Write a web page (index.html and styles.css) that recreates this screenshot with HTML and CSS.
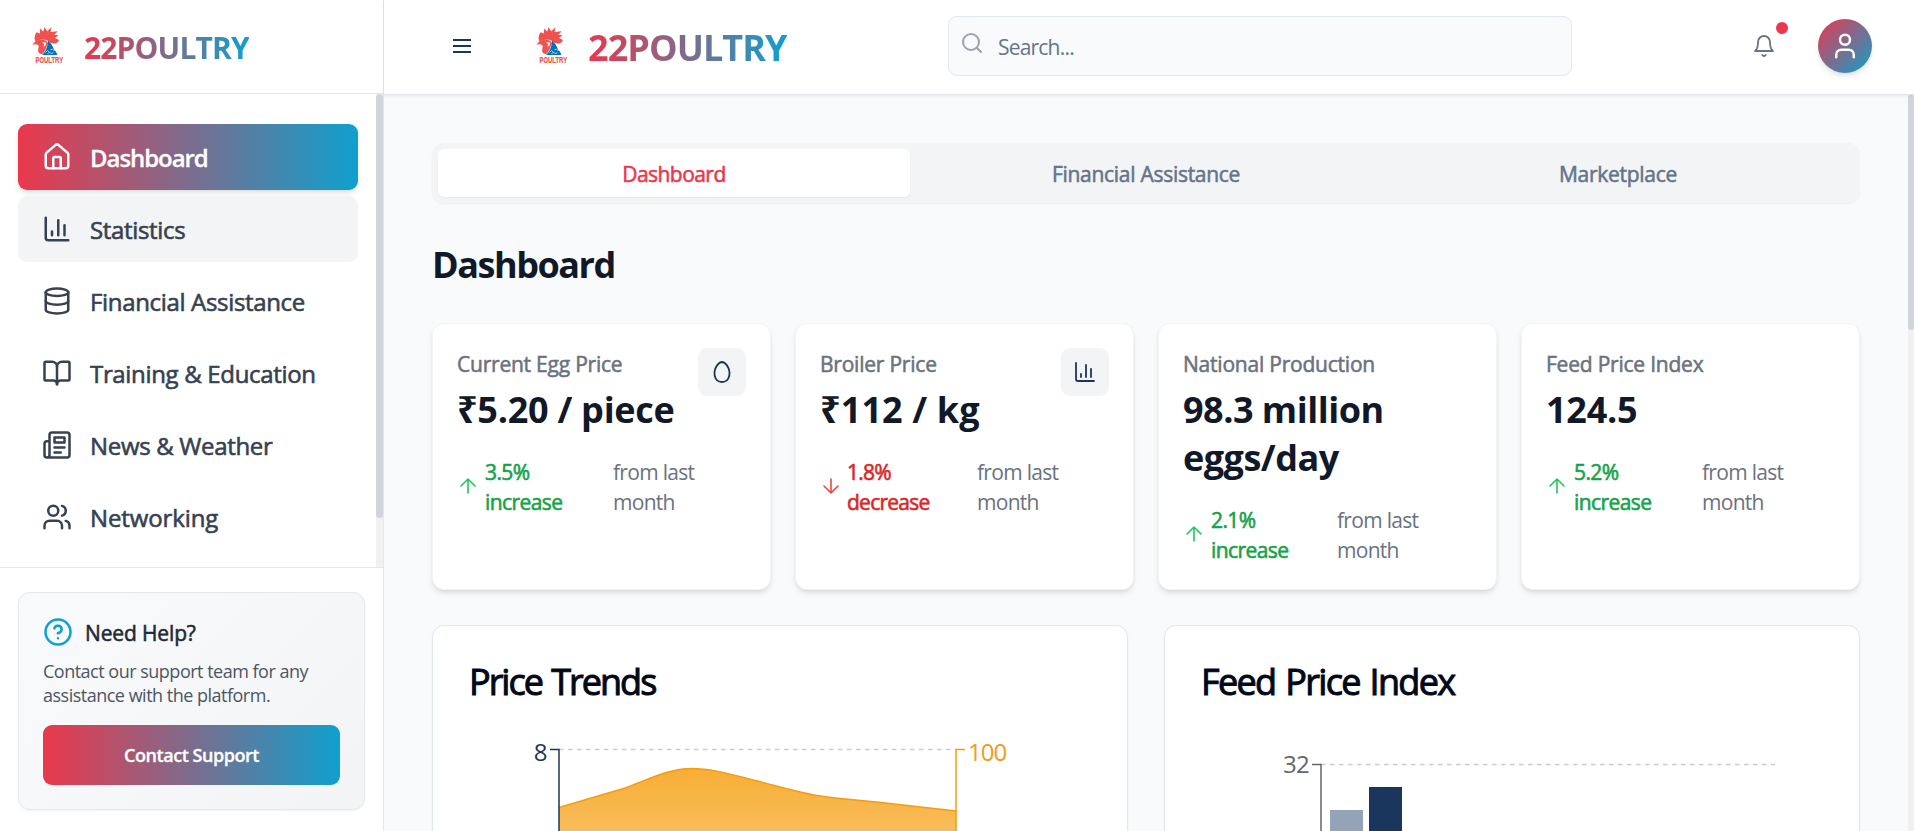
FILE: index.html
```html
<!DOCTYPE html>
<html lang="en">
<head>
<meta charset="utf-8">
<title>22POULTRY</title>
<link rel="stylesheet" href="styles.css">
</head>
<body>
<svg class="defs" width="0" height="0" aria-hidden="true">
  <defs>
    <linearGradient id="area" x1="0" y1="0" x2="0" y2="1">
      <stop offset="0" stop-color="#f7ae35"/><stop offset="1" stop-color="#fdebd0"/>
    </linearGradient>
    <symbol id="rooster" viewBox="0 0 32 38">
      <path fill="#f0524f" d="M3.500 14.500C1.800 11.500 2.800 7.500 4.600 5.200L7.800 6.500L8 1.500L11.200 4.500L12.600 .2L15.200 4.200L19.500 .3L18.500 5L25.700 4.200L22.300 7.700L26.500 8.300L23 11L27 13C26 16.500 21.500 17.500 18.500 15.800C15.500 12.500 10 11 3.500 14.500Z"/>
      <path fill="#f0524f" d="M.3 17.800L3.300 14.500C8.500 10.800 14 12.600 16 16C14.500 19 14 23.500 10.500 26.700C7.500 27.800 5.400 25 6.300 21.500C6.600 20 7 19 6.200 18C4.500 16.800 2.300 17 .3 17.800Z"/>
      <path fill="#fff" d="M9.500 15C12 15.500 12.500 18 11.500 20C13.500 19 14.200 17.500 14 15.500Z"/>
      <path fill="#0870b8" d="M16 13.500C19 16 21 19.500 22 22.500C23.500 24 25 26 25.300 28H10C13 25.500 15.500 21 16 13.500Z"/>
      <path fill="none" stroke="#cfe6f5" stroke-width=".8" d="M13.500 25.500l2-2 2 2m1-2.500l2-1 2 2m-7 3l2-2 2 2 2-2"/>
      <text class="mark-text" x="3.600" y="36.200" textLength="27.500" lengthAdjust="spacingAndGlyphs">POULTRY</text>
    </symbol>
    <symbol id="chart" viewBox="0 0 24 24"><path d="M3 3v16a2 2 0 0 0 2 2h16M18 17V9M13 17V5M8 17v-3"/></symbol>
    <symbol id="up" viewBox="0 0 24 24"><path d="m5 12 7-7 7 7M12 19V5"/></symbol>
    <symbol id="down" viewBox="0 0 24 24"><path d="M12 5v14M19 12l-7 7-7-7"/></symbol>
  </defs>
</svg>
<div class="app">
  <aside class="sidebar">
    <div class="brand">
      <svg class="brand-mark"><use href="#rooster"/></svg>
      <span class="brand-name">22POULTRY</span>
    </div>
    <div class="nav-area">
      <nav class="nav">
        <a class="nav-item active"><svg class="icon icon-30" viewBox="0 0 24 24"><path d="M15 21v-8a1 1 0 0 0-1-1h-4a1 1 0 0 0-1 1v8"/><path d="M3 10a2 2 0 0 1 .709-1.528l7-5.999a2 2 0 0 1 2.582 0l7 5.999A2 2 0 0 1 21 10v9a2 2 0 0 1-2 2H5a2 2 0 0 1-2-2z"/></svg><span>Dashboard</span></a>
        <a class="nav-item hover"><svg class="icon icon-30"><use href="#chart"/></svg><span>Statistics</span></a>
        <a class="nav-item"><svg class="icon icon-30" viewBox="0 0 24 24"><ellipse cx="12" cy="5" rx="9" ry="3"/><path d="M3 5v14a9 3 0 0 0 18 0V5"/><path d="M3 12a9 3 0 0 0 18 0"/></svg><span>Financial Assistance</span></a>
        <a class="nav-item"><svg class="icon icon-30" viewBox="0 0 24 24"><path d="M12 7v14"/><path d="M3 18a1 1 0 0 1-1-1V4a1 1 0 0 1 1-1h5a4 4 0 0 1 4 4 4 4 0 0 1 4-4h5a1 1 0 0 1 1 1v13a1 1 0 0 1-1 1h-6a3 3 0 0 0-3 3 3 3 0 0 0-3-3z"/></svg><span>Training &amp; Education</span></a>
        <a class="nav-item"><svg class="icon icon-30" viewBox="0 0 24 24"><path d="M4 22h16a2 2 0 0 0 2-2V4a2 2 0 0 0-2-2H8a2 2 0 0 0-2 2v16a2 2 0 0 1-2 2Zm0 0a2 2 0 0 1-2-2v-9c0-1.100.9-2 2-2h2M18 14h-8M15 18h-5M10 6h8v4h-8V6Z"/></svg><span>News &amp; Weather</span></a>
        <a class="nav-item wide"><svg class="icon icon-30" viewBox="0 0 24 24"><path d="M16 21v-2a4 4 0 0 0-4-4H6a4 4 0 0 0-4 4v2"/><circle cx="9" cy="7" r="4"/><path d="M22 21v-2a4 4 0 0 0-3-3.870M16 3.130a4 4 0 0 1 0 7.750"/></svg><span>Networking</span></a>
      </nav>
      <div class="scrollbar nav-scroll"><div class="thumb"></div></div>
    </div>
    <div class="sidebar-foot">
      <div class="help">
        <div class="help-head"><svg class="icon icon-30" viewBox="0 0 24 24"><circle cx="12" cy="12" r="10"/><path d="M9.090 9a3 3 0 0 1 5.830 1c0 2-3 3-3 3M12 17h.01"/></svg><span>Need Help?</span></div>
        <p class="help-text">Contact our support team for any<br>assistance with the platform.</p>
        <button class="help-btn">Contact Support</button>
      </div>
    </div>
  </aside>

  <div class="page">
    <header class="topbar">
      <svg class="icon menu" viewBox="0 0 24 24"><path d="M4 6h16M4 12h16M4 18h16"/></svg>
      <div class="top-brand">
        <svg class="brand-mark"><use href="#rooster"/></svg>
        <span class="brand-name large">22POULTRY</span>
      </div>
      <div class="search">
        <svg class="icon icon-24" viewBox="0 0 24 24"><circle cx="11" cy="11" r="8"/><path d="m21 21-4.300-4.300"/></svg>
        <span>Search...</span>
      </div>
      <div class="top-actions">
        <div class="bell"><svg class="icon icon-24" viewBox="0 0 24 24"><path d="M6 8a6 6 0 0 1 12 0c0 7 3 9 3 9H3s3-2 3-9M10.300 21a1.940 1.940 0 0 0 3.400 0"/></svg><i class="dot"></i></div>
        <div class="avatar"><svg class="icon icon-30" viewBox="0 0 24 24"><path d="M19 21v-2a4 4 0 0 0-4-4H9a4 4 0 0 0-4 4v2"/><circle cx="12" cy="7" r="4"/></svg></div>
      </div>
    </header>

    <div class="body">
      <main class="main">
        <div class="tabs">
          <div class="tab selected">Dashboard</div>
          <div class="tab">Financial Assistance</div>
          <div class="tab">Marketplace</div>
        </div>
        <h1 class="title">Dashboard</h1>
        <section class="stats">
          <article class="stat">
            <div class="stat-top">
              <div><div class="stat-label">Current Egg Price</div><div class="stat-value">₹5.20 / piece</div></div>
              <div class="stat-icon"><svg class="icon icon-24" viewBox="0 0 24 24"><path d="M12 22c6.230-.05 7.870-5.570 7.500-10-.36-4.340-3.950-9.960-7.500-10-3.550.04-7.140 5.660-7.500 10-.37 4.430 1.270 9.950 7.500 10z"/></svg></div>
            </div>
            <div class="trend up"><svg class="icon icon-24"><use href="#up"/></svg><b>3.5% increase</b><span>from last month</span></div>
          </article>
          <article class="stat">
            <div class="stat-top">
              <div><div class="stat-label">Broiler Price</div><div class="stat-value loose">₹112 / kg</div></div>
              <div class="stat-icon"><svg class="icon icon-24"><use href="#chart"/></svg></div>
            </div>
            <div class="trend down"><svg class="icon icon-24"><use href="#down"/></svg><b>1.8% decrease</b><span>from last month</span></div>
          </article>
          <article class="stat">
            <div class="stat-top">
              <div><div class="stat-label">National Production</div><div class="stat-value tight">98.3 million<br>eggs/day</div></div>
            </div>
            <div class="trend up near"><svg class="icon icon-24"><use href="#up"/></svg><b>2.1% increase</b><span>from last month</span></div>
          </article>
          <article class="stat">
            <div class="stat-top">
              <div><div class="stat-label">Feed Price Index</div><div class="stat-value">124.5</div></div>
            </div>
            <div class="trend up"><svg class="icon icon-24"><use href="#up"/></svg><b>5.2% increase</b><span>from last month</span></div>
          </article>
        </section>
        <section class="charts">
          <article class="panel">
            <h2 class="panel-title trends">Price Trends</h2>
            <svg class="plot" viewBox="469 731 622 300" width="622" height="300">
              <path d="M559 749.500H956" stroke="#ccc" stroke-width="1.500" stroke-dasharray="4.500 4.500"/>
              <path d="M559 807.500C581 801 603 794.500 625.200 788C647 780 669 768.500 691.300 768.500C713 768.500 735 775.500 757.500 781C779 786.500 801 793.500 823.700 796.500C846 799.500 868 801 889.800 803.500C912 806 934 808.500 956 811V1031H559Z" fill="url(#area)"/>
              <path d="M559 807.500C581 801 603 794.500 625.200 788C647 780 669 768.500 691.300 768.500C713 768.500 735 775.500 757.500 781C779 786.500 801 793.500 823.700 796.500C846 799.500 868 801 889.800 803.500C912 806 934 808.500 956 811" fill="none" stroke="#f39c12" stroke-width="1.500"/>
              <path d="M550 749.500h9V1031" fill="none" stroke="#1a365d" stroke-width="1.500"/>
              <path d="M965 749.500h-9V1031" fill="none" stroke="#f39c12" stroke-width="1.500"/>
              <text x="547.500" y="761" text-anchor="end" fill="#1a365d">8</text>
              <text x="968" y="761" fill="#f39c12" letter-spacing="-1">100</text>
            </svg>
          </article>
          <article class="panel">
            <h2 class="panel-title index">Feed Price Index</h2>
            <svg class="plot" viewBox="1201 731 622 300" width="622" height="300">
              <path d="M1321 764.500H1775" stroke="#ccc" stroke-width="1.500" stroke-dasharray="4.500 4.500"/>
              <path d="M1312 764.500h9V1031" fill="none" stroke="#666" stroke-width="1.500"/>
              <path d="M1330 810h33v221h-33z" fill="#94a3b8"/>
              <path d="M1369 787h33v244h-33z" fill="#1a365d"/>
              <text x="1283" y="773" fill="#666" letter-spacing="-.8">32</text>
            </svg>
          </article>
        </section>
      </main>
      <div class="scrollbar page-scroll"><div class="thumb"></div></div>
    </div>
  </div>
</div>
</body>
</html>
```
FILE: styles.css
```css
* { box-sizing: border-box; margin: 0; }
html, body { height: 100%; overflow: hidden; }
body { font-family: "Open Sans", "Noto Sans", sans-serif; background: #f8fafc; color: #111827; }
.defs { position: absolute; }
.app { display: flex; height: 831px; }
.icon { fill: none; stroke: currentColor; stroke-width: 2; stroke-linecap: round; stroke-linejoin: round; flex: none; display: block; }
.icon-30 { width: 30px; height: 30px; stroke-width: 2; }
.icon-24 { width: 24px; height: 24px; stroke-width: 1.8; }

/* Sidebar */
.sidebar { width: 384px; flex: none; display: flex; flex-direction: column; background: #fff; border-right: 1px solid #e5e7eb; }
.brand { height: 94px; flex: none; display: flex; align-items: center; gap: 20px; padding: 0 0 2px 32px; border-bottom: 1px solid #e5e7eb; }
.brand-mark { width: 32px; height: 38px; flex: none; display: block; }
.mark-text { font: 700 8.5px "Liberation Sans", sans-serif; fill: #f0524f; stroke: #f0524f; stroke-width: .2px; }
.brand-name { font-size: 30px; line-height: 36px; font-weight: 700; letter-spacing: -.86px; padding-top: 4px; background: linear-gradient(90deg, #ea384c, #0fa0ce); -webkit-background-clip: text; background-clip: text; color: transparent; }
.brand-name.large { font-size: 36px; letter-spacing: -.95px; }
.nav-area { flex: 1; min-height: 0; display: flex; }
.nav { flex: 1; padding: 30px 18px 0; display: flex; flex-direction: column; gap: 6px; }
.nav-item { height: 66px; flex: none; display: flex; align-items: center; gap: 18px; padding-left: 24px; border-radius: 9px; font-size: 24px; line-height: 36px; letter-spacing: -.33px; color: #374151; -webkit-text-stroke: .6px; }
.nav-item span { padding-top: 2px; }
.nav-item.wide { letter-spacing: -.12px; }
.nav-item.active { color: #fff; letter-spacing: -1.06px; font-weight: 600; -webkit-text-stroke: .3px; background: linear-gradient(90deg, #ea384c, #0fa0ce); box-shadow: 0 4px 6px -1px rgba(0,0,0,.1), 0 2px 4px -2px rgba(0,0,0,.1); }
.nav-item.hover { background: #f3f4f6; }
.scrollbar { background: #f1f1f1; flex: none; }
.thumb { background: #d1d5db; border-radius: 5px; }
.nav-scroll { width: 7px; }
.nav-scroll .thumb { height: 424px; }
.sidebar-foot { height: 264px; flex: none; border-top: 1px solid #e5e7eb; padding: 24px 18px 21px; }
.help { height: 218px; border: 1px solid #e5e7eb; border-radius: 12px; padding: 24px; background: linear-gradient(135deg, #f9fafb, #f3f4f6); box-shadow: 0 1px 2px rgba(0,0,0,.05); }
.help-head { display: flex; align-items: center; gap: 12px; height: 30px; color: #1f2937; font-size: 21px; letter-spacing: -.14px; -webkit-text-stroke: .55px; }
.help-head span { padding-top: 2px; }
.help-head .icon { color: #0fa0ce; }
.help-text { margin-top: 12px; font-size: 18px; line-height: 24px; letter-spacing: -.5px; color: #4b5563; white-space: nowrap; }
.help-btn { display: block; width: 100%; height: 60px; margin-top: 18px; border: 0; border-radius: 9px; background: linear-gradient(90deg, #ea384c, #0fa0ce); color: #fff; font: 600 18px "Open Sans", sans-serif; letter-spacing: -.46px; -webkit-text-stroke: .3px; }

/* Top bar */
.page { flex: 1; min-width: 0; display: flex; flex-direction: column; }
.topbar { height: 95px; flex: none; z-index: 1; display: flex; align-items: center; background: #fff; border-bottom: 1px solid #e2e4ea; box-shadow: 0 1px 3px rgba(0,0,0,.08); padding: 0 42px 2px 66px; }
.menu { width: 24px; height: 24px; color: #1a365d; stroke-linecap: square; }
.top-brand { display: flex; align-items: center; gap: 20px; margin-left: 62px; width: 412px; }
.search { width: 624px; height: 60px; display: flex; border: 1px solid #e2e8f0; border-radius: 9px; background: #f8fafc; padding: 14px 11px; gap: 14px; color: #64748b; font-size: 21px; line-height: 30px; letter-spacing: -.8px; }
.search .icon { color: #9ca3af; stroke-width: 2; }
.search span { padding-top: 1px; }
.top-actions { margin-left: auto; display: flex; align-items: center; gap: 42px; }
.bell { position: relative; color: #6b7280; }
.dot { position: absolute; width: 12px; height: 12px; border-radius: 50%; background: #ea384c; left: 24px; top: -12px; }
.avatar { width: 54px; height: 54px; border-radius: 50%; display: grid; place-items: center; color: #fff; background: linear-gradient(135deg, #ea384c, #0fa0ce); box-shadow: 0 4px 6px -1px rgba(0,0,0,.1), 0 2px 4px -2px rgba(0,0,0,.1); }

/* Content */
.body { flex: 1; min-height: 0; display: flex; }
.main { flex: 1; min-width: 0; overflow: hidden; padding: 48px 48px 0; }
.page-scroll { width: 6px; }
.page-scroll .thumb { height: 235px; }
.tabs { display: grid; grid-template-columns: repeat(3, 1fr); height: 60px; padding: 6px; border-radius: 12px; background: #f3f4f6; box-shadow: 0 1px 2px rgba(0,0,0,.05); }
.tab { display: grid; place-items: center; border-radius: 6px; font-size: 21px; letter-spacing: -.28px; color: #64748b; -webkit-text-stroke: .55px; padding-top: 2px; }
.tab.selected { background: #fff; color: #ea384c; letter-spacing: -.55px; box-shadow: 0 1px 2px rgba(0,0,0,.05); }
.title { margin-top: 38px; font-size: 36px; line-height: 48px; font-weight: 700; letter-spacing: -1.45px; }
.stats { display: grid; grid-template-columns: repeat(4, 1fr); gap: 24px; margin-top: 34px; height: 266px; }
.stat { background: #fff; border: 1px solid #f3f4f6; border-radius: 12px; padding: 24px; box-shadow: 0 4px 6px -1px rgba(0,0,0,.1), 0 2px 4px -2px rgba(0,0,0,.1); }
.stat-top { display: flex; justify-content: space-between; white-space: nowrap; }
.stat-label { font-size: 21px; line-height: 30px; letter-spacing: -.22px; color: #6b7280; -webkit-text-stroke: .55px; padding-top: 1px; }
.stat-value { margin-top: 7px; font-size: 36px; line-height: 48px; font-weight: 700; letter-spacing: -.26px; }
.stat-value.tight { letter-spacing: -.5px; }
.stat-value.loose { letter-spacing: .12px; }
.stat-icon { width: 48px; height: 48px; border-radius: 9px; background: #f3f4f6; color: #1a365d; display: grid; place-items: center; }
.trend { margin-top: 21px; display: flex; align-items: center; font-size: 21px; line-height: 30px; }
.trend b { width: 128px; padding: 2px 40px 0 4px; font-weight: 400; -webkit-text-stroke: .6px; letter-spacing: -.58px; }
.trend .icon { margin-left: -1px; margin-right: 1px; stroke-width: 1.6; }
.trend span { width: 90px; margin-left: 4px; padding-top: 2px; letter-spacing: -.71px; color: #6b7280; }
.trend.up b { color: #16a34a; }
.trend.up .icon { color: #22c55e; }
.trend.down b { color: #dc2626; letter-spacing: -.75px; padding-left: 3px; padding-right: 38px; }
.trend.down .icon { color: #ef4444; }
.trend.down span { margin-left: 5px; }
.trend.near span { margin-left: 2px; }
.charts { display: grid; grid-template-columns: 1fr 1fr; gap: 36px; margin-top: 36px; }
.panel { background: #fff; border: 1px solid #e2e8f0; border-radius: 12px; padding: 36px; height: 480px; box-shadow: 0 1px 2px rgba(0,0,0,.05); }
.panel-title { font-size: 36px; line-height: 36px; font-weight: 400; color: #020817; -webkit-text-stroke: 1px; padding-top: 2px; word-spacing: 2px; }
.panel-title.trends { letter-spacing: -2px; }
.panel-title.index { letter-spacing: -1.65px; }
.plot { display: block; margin-top: 31px; font-size: 24px; }
```
